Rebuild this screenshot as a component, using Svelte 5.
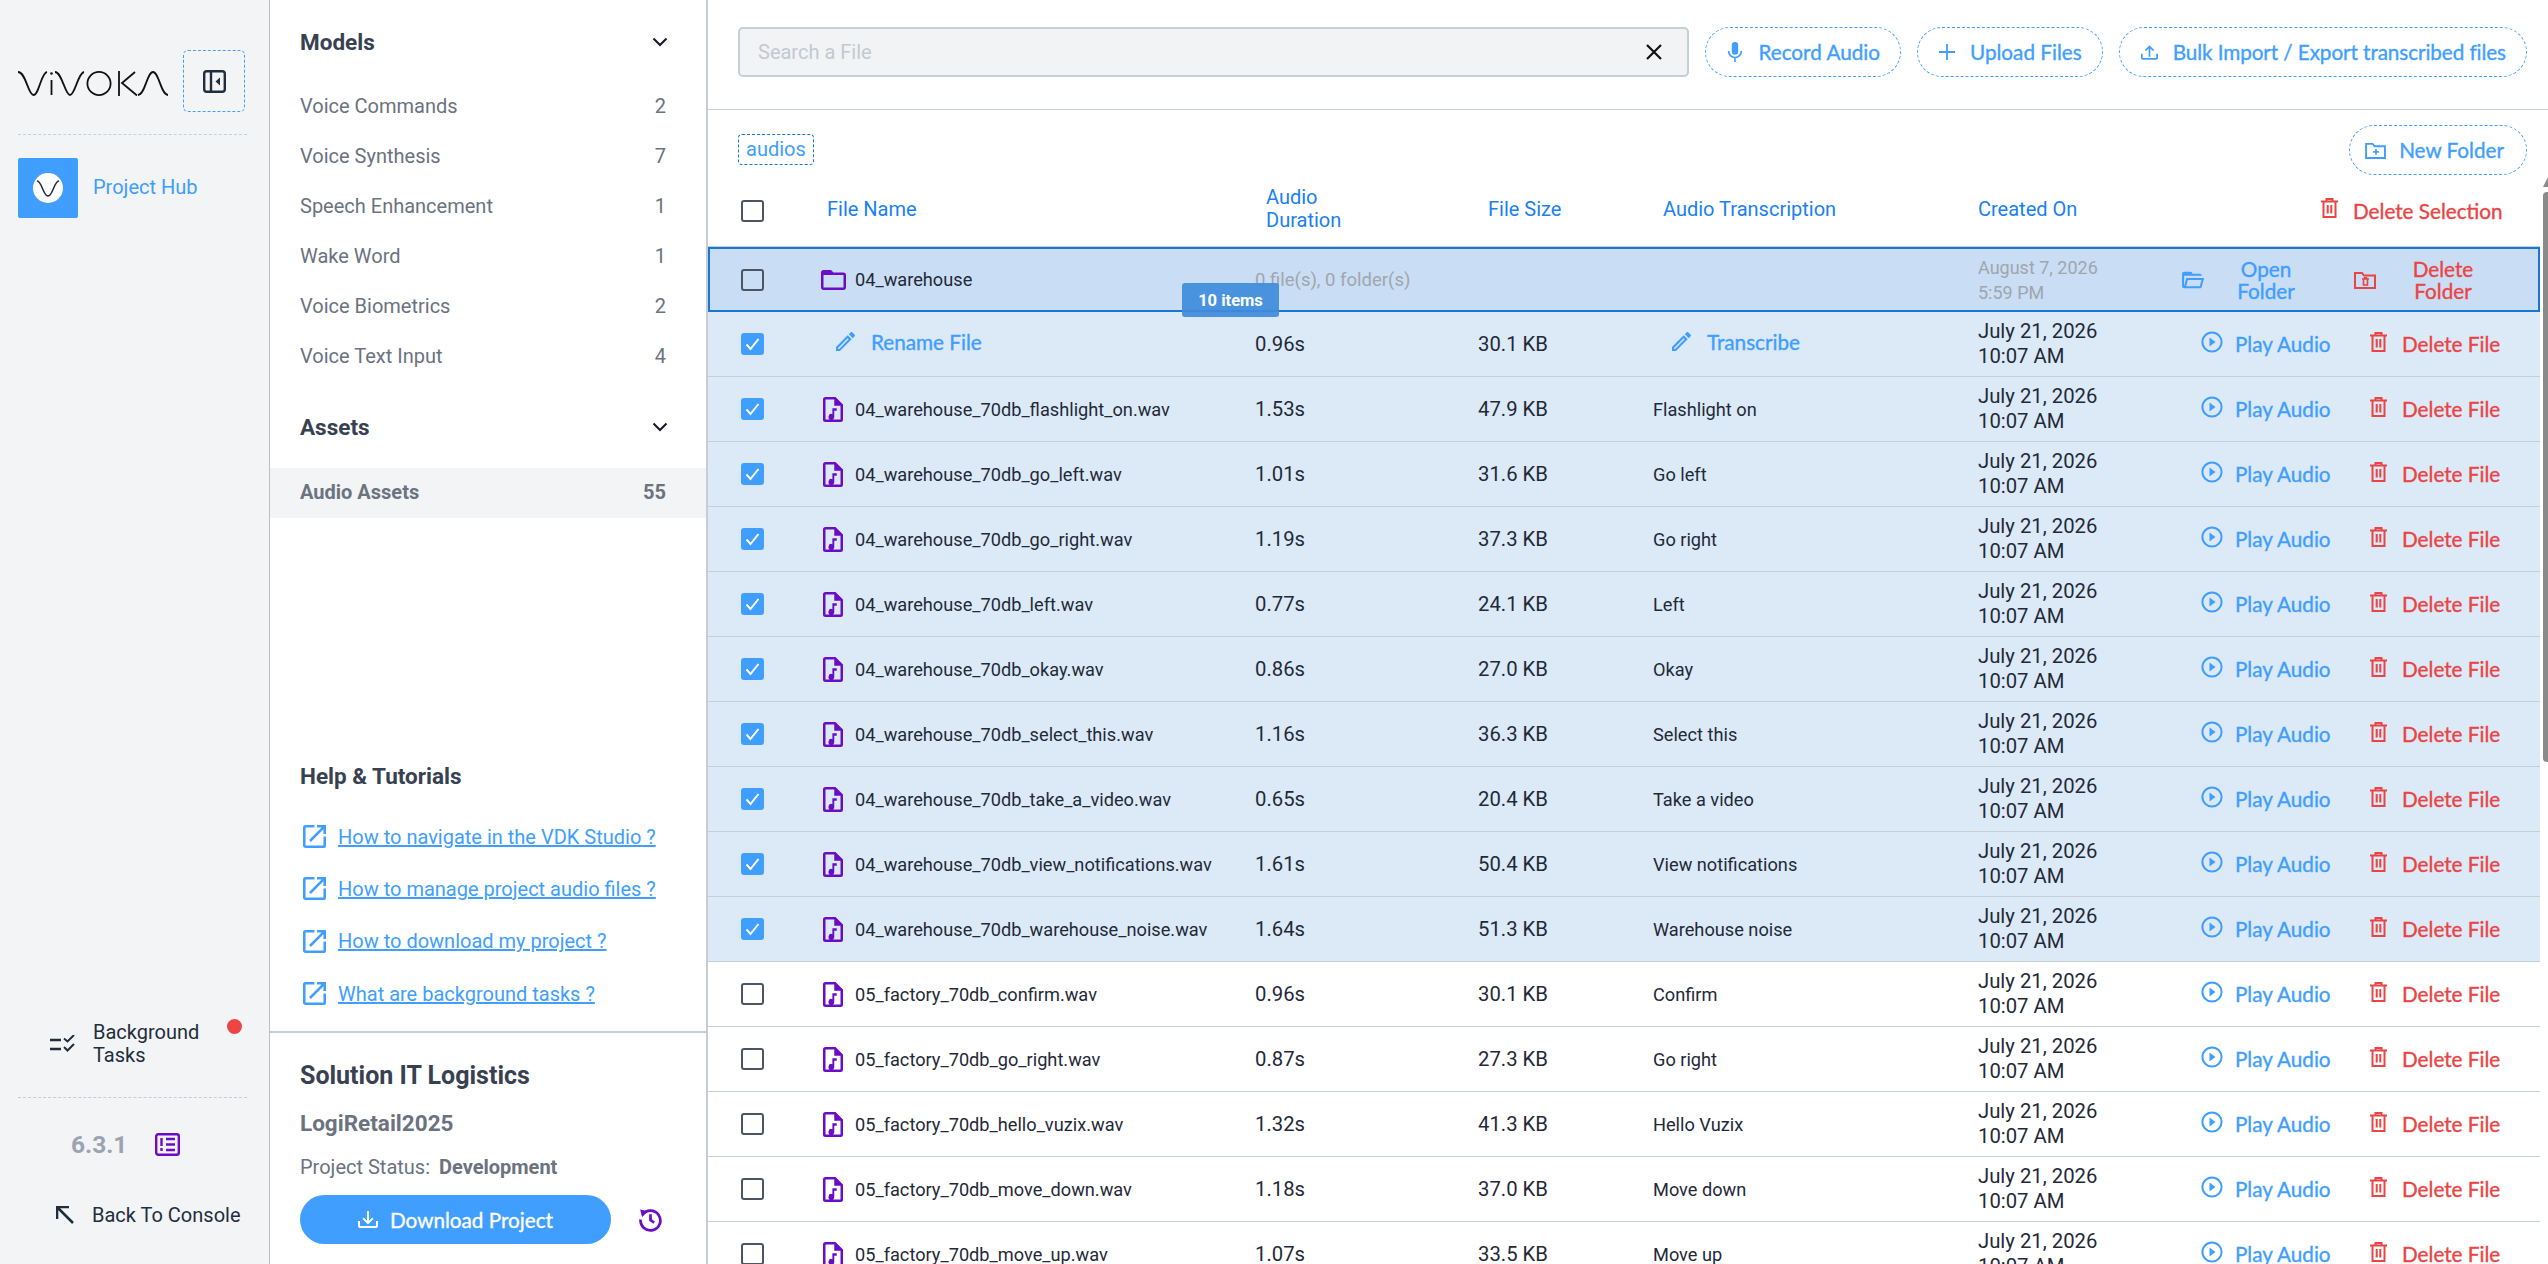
<script>
  const models = [
    ['Voice Commands', 2],
    ['Voice Synthesis', 7],
    ['Speech Enhancement', 1],
    ['Wake Word', 1],
    ['Voice Biometrics', 2],
    ['Voice Text Input', 4]
  ];
  const links = [
    'How to navigate in the VDK Studio ?',
    'How to manage project audio files ?',
    'How to download my project ?',
    'What are background tasks ?'
  ];
  const rows = [
    ['04_warehouse_70db_flashlight_on.wav', '1.53s', '47.9 KB', 'Flashlight on', true],
    ['04_warehouse_70db_go_left.wav', '1.01s', '31.6 KB', 'Go left', true],
    ['04_warehouse_70db_go_right.wav', '1.19s', '37.3 KB', 'Go right', true],
    ['04_warehouse_70db_left.wav', '0.77s', '24.1 KB', 'Left', true],
    ['04_warehouse_70db_okay.wav', '0.86s', '27.0 KB', 'Okay', true],
    ['04_warehouse_70db_select_this.wav', '1.16s', '36.3 KB', 'Select this', true],
    ['04_warehouse_70db_take_a_video.wav', '0.65s', '20.4 KB', 'Take a video', true],
    ['04_warehouse_70db_view_notifications.wav', '1.61s', '50.4 KB', 'View notifications', true],
    ['04_warehouse_70db_warehouse_noise.wav', '1.64s', '51.3 KB', 'Warehouse noise', true],
    ['05_factory_70db_confirm.wav', '0.96s', '30.1 KB', 'Confirm', false],
    ['05_factory_70db_go_right.wav', '0.87s', '27.3 KB', 'Go right', false],
    ['05_factory_70db_hello_vuzix.wav', '1.32s', '41.3 KB', 'Hello Vuzix', false],
    ['05_factory_70db_move_down.wav', '1.18s', '37.0 KB', 'Move down', false],
    ['05_factory_70db_move_up.wav', '1.07s', '33.5 KB', 'Move up', false]
  ];
</script>

{#snippet check(on)}
  <span class="check" class:on>
    {#if on}
      <svg viewBox="0 0 23 22" width="23" height="22"><path d="M5.5 11.5l4 4.5 8-10" fill="none" stroke="#fff" stroke-width="2"/></svg>
    {/if}
  </span>
{/snippet}

{#snippet pencil()}
  <svg class="pen" viewBox="3 3 18 18" width="19" height="19"><path fill="currentColor" d="M14.06 9.02l.92.92L5.92 19H5v-.92zM17.66 3c-.25 0-.51.1-.7.29l-1.83 1.83 3.75 3.75 1.83-1.83c.39-.39.39-1.04 0-1.41l-2.34-2.34c-.2-.2-.45-.29-.71-.29m-3.6 3.19L3 17.25V21h3.75L17.81 9.94z"/></svg>
{/snippet}

{#snippet trash()}
  <svg class="trash" viewBox="0 0 17 20" width="17" height="20"><path fill="none" stroke="currentColor" stroke-width="2" d="M0 3.5h17M5.5 3V1h6v2M2.5 3.5V19h12V3.5M6.7 7v8.500M10.300 7v8.500"/></svg>
{/snippet}

{#snippet fileActions()}
  <div class="actions">
    <svg class="play" viewBox="0 0 22 22" width="22" height="22"><circle cx="11" cy="11" r="9.600" fill="none" stroke="currentColor" stroke-width="2"/><path d="M8.500 6.500l6 4.500-6 4.500z" fill="currentColor"/></svg>
    <span class="act blue playtext">Play Audio</span>
    <span class="red trashwrap">{@render trash()}</span>
    <span class="act red deltext">Delete File</span>
  </div>
{/snippet}

<div class="app">
  <nav class="rail">
    <div class="brand">
      <svg class="logo" viewBox="0 0 150 25" width="150" height="25" aria-label="Vivoka">
        <g fill="none" stroke="#111" stroke-width="1.800">
          <path d="M0 1C8 1 10 24 15.500 24S23 2 29 1"/>
          <path d="M33.500 9V24"/>
          <path d="M37 1C44 1 47 24 52 24S60 2 66 1"/>
          <circle cx="81" cy="12.500" r="11.600"/>
          <path d="M101 0V25M117 1L104 12L119 24.500"/>
          <path d="M120 24C127 24 129 1 135 1S143 24 150 24"/>
        </g>
        <circle cx="33.500" cy="2.500" r="1.300" fill="#111"/>
      </svg>
      <button class="toggle" aria-label="Collapse">
        <svg viewBox="0 0 23 23" width="23" height="23"><rect x="1.200" y="1.200" width="20.600" height="20.600" rx="2.500" fill="none" stroke="#1f2d3d" stroke-width="2.400"/><path d="M8 1v21" stroke="#1f2d3d" stroke-width="2.400"/><path d="M17 7.500v8l-4.500-4z" fill="#1f2d3d"/></svg>
      </button>
    </div>
    <div class="hub">
      <span class="hubicon">
        <span class="hubdot">
          <svg viewBox="0 0 22 17" width="22" height="17"><path d="M0 1C5 1 6 16 11 16S17 1 22 1" fill="none" stroke="#1f2d3d" stroke-width="1.500"/></svg>
        </span>
      </span>
      <span class="hubtext">Project Hub</span>
    </div>

    <div class="railbottom">
      <div class="tasks">
        <svg viewBox="0 0 26 18" width="26" height="18"><path d="M0 5h11M0 14h11" stroke="#1f2d3d" stroke-width="2.400"/><path d="M14 3.500l3.500 3L24 0M14 12l3.500 3.500L24 9" fill="none" stroke="#1f2d3d" stroke-width="2"/></svg>
        <span class="taskstext">Background<br/>Tasks</span>
        <span class="dot"></span>
      </div>
      <div class="version">
        <span class="vnum">6.3.1</span>
        <svg viewBox="0 0 25 23" width="25" height="23"><rect x="1.200" y="1.200" width="22.600" height="20.600" rx="2" fill="none" stroke="#6a0dc4" stroke-width="2.400"/><path d="M6.500 5v8M6.500 15v3M11 6h9M11 11.500h9M11 17h9" stroke="#6a0dc4" stroke-width="2.400"/></svg>
      </div>
      <div class="back">
        <svg viewBox="0 0 18 18" width="18" height="18"><path d="M17 17L2 2M1 13V1h12" fill="none" stroke="#1f2d3d" stroke-width="2.600"/></svg>
        <span>Back To Console</span>
      </div>
    </div>
  </nav>

  <aside class="side">
    <div class="sechead"><span>Models</span>
      <svg viewBox="0 0 16 10" width="16" height="10"><path d="M1.500 1.500L8 8l6.500-6.500" fill="none" stroke="#111827" stroke-width="2"/></svg>
    </div>
    <ul class="mlist">
      {#each models as [n, c]}
        <li><span>{n}</span><span class="count">{c}</span></li>
      {/each}
    </ul>
    <div class="sechead assets"><span>Assets</span>
      <svg viewBox="0 0 16 10" width="16" height="10"><path d="M1.500 1.500L8 8l6.500-6.500" fill="none" stroke="#111827" stroke-width="2"/></svg>
    </div>
    <div class="activeitem"><span>Audio Assets</span><span class="count">55</span></div>

    <div class="help">
      <div class="helptitle">Help &amp; Tutorials</div>
      {#each links as l}
        <div class="hlink">
          <svg viewBox="3 3 18 18" width="23" height="23"><path fill="#409eff" d="M14 3v2h3.590l-9.830 9.830 1.410 1.410L19 6.410V10h2V3m-2 16H5V5h7V3H5a2 2 0 0 0-2 2v14c0 1.100.9 2 2 2h14a2 2 0 0 0 2-2v-7h-2z"/></svg>
          <span>{l}</span>
        </div>
      {/each}
    </div>

    <div class="project">
      <div class="ptitle">Solution IT Logistics</div>
      <div class="pname">LogiRetail2025</div>
      <div class="pstatus">Project Status: <b>Development</b></div>
      <div class="pbtns">
        <button class="download">
          <svg viewBox="2 2 20 17" width="20" height="17"><path fill="#fff" d="M2 12h2v5h16v-5h2v5c0 1.110-.89 2-2 2H4a2 2 0 0 1-2-2zM12 15.500l5.540-5.460-1.420-1.420L13 11.670V2h-2v9.670L7.880 8.620 6.460 10.040z"/></svg>
          <span>Download Project</span>
        </button>
        <svg class="hist" viewBox="0 0 24 24" width="25" height="25"><path fill="none" stroke="#6a0dc4" stroke-width="2.600" d="M4.200 7.500A9.500 9.500 0 1 1 2.500 12M12 7v5.500l3.500 2.500"/><path fill="#6a0dc4" d="M2 2.500l7.500 1.500-5.500 5.500z"/></svg>
      </div>
    </div>
  </aside>

  <main class="main">
    <div class="toolbar">
      <div class="search">
        <span class="ph">Search a File</span>
        <svg viewBox="0 0 18 18" width="18" height="18"><path d="M2 2l14 14M16 2L2 16" stroke="#111" stroke-width="2.200"/></svg>
      </div>
      <button class="pill">
        <svg viewBox="0 0 16 24" width="16" height="22"><path fill="currentColor" d="M8 1a3.500 3.500 0 0 0-3.500 3.500v7a3.500 3.500 0 0 0 7 0v-7A3.500 3.500 0 0 0 8 1z"/><path fill="none" stroke="currentColor" stroke-width="1.800" d="M1 11a7 7 0 0 0 14 0M8 18v5"/></svg>
        <span>Record Audio</span>
      </button>
      <button class="pill">
        <svg viewBox="0 0 16 16" width="16" height="16"><path d="M8 0v16M0 8h16" stroke="currentColor" stroke-width="1.800"/></svg>
        <span>Upload Files</span>
      </button>
      <button class="pill bulk">
        <svg viewBox="2 2 20 17" width="17" height="17"><path fill="currentColor" d="M2 12h2v5h16v-5h2v5c0 1.110-.89 2-2 2H4a2 2 0 0 1-2-2zM12 2 6.460 7.460l1.420 1.420L11 5.830v9.630h2V5.830l3.130 3.130 1.420-1.430z"/></svg>
        <span>Bulk Import / Export transcribed files</span>
      </button>
    </div>

    <div class="crumbs">
      <span class="crumb">audios</span>
      <button class="pill newf">
        <svg viewBox="0 0 22 18" width="21" height="17"><path fill="none" stroke="currentColor" stroke-width="2" d="M1 2h7l2 2.500h11V17H1z"/><path d="M11.500 7.500v6M8.500 10.500h6" stroke="currentColor" stroke-width="1.800"/></svg>
        <span>New Folder</span>
      </button>
    </div>

    <div class="grid thead">
      {@render check(false)}
      <span class="h h-name">File Name</span>
      <span class="h h-dur">Audio<br/>Duration</span>
      <span class="h h-size">File Size</span>
      <span class="h h-tr">Audio Transcription</span>
      <span class="h h-cr">Created On</span>
      <span class="delsel red">{@render trash()}<span class="act">Delete Selection</span></span>
    </div>

    <div class="grid row folder">
      {@render check(false)}
      <span class="name">
        <svg class="ficon" viewBox="2 4 20 16" width="25" height="20"><path fill="#6a0dc4" d="M20 18H4V8h16m0-2h-8l-2-2H4c-1.100 0-2 .9-2 2v12c0 1.100.9 2 2 2h16c1.100 0 2-.9 2-2V8c0-1.100-.9-2-2-2"/></svg>
        <span>04_warehouse</span>
      </span>
      <span class="muted small">0 file(s), 0 folder(s)</span>
      <span></span>
      <span></span>
      <span class="date muted mdate">August 7, 2026<br/>5:59 PM</span>
      <div class="factions">
        <svg class="blue" viewBox="2 4 22 16" width="23" height="18"><path fill="currentColor" d="M6.100 10 4 18V8h17a2 2 0 0 0-2-2h-7a2 2 0 0 0-2-2H4a2 2 0 0 0-2 2v12a2 2 0 0 0 2 2h15c.9 0 1.700-.6 1.900-1.500l2.300-8.500H6.100M19 18H6l1.600-6h13z"/></svg>
        <span class="act blue f1">Open<br/>Folder</span>
        <svg class="red fdel" viewBox="0 0 22 18" width="22" height="18"><path fill="none" stroke="currentColor" stroke-width="2" d="M1 2h7l2 2.500h11V17H1z"/><path fill="none" stroke="currentColor" stroke-width="1.600" d="M8 8h7M9.500 8v6h4V8M10.500 8V6.800h2V8"/></svg>
        <span class="act red f2">Delete<br/>Folder</span>
      </div>
    </div>
    <div class="tip">10 items</div>

    <div class="grid row sel">
      {@render check(true)}
      <span class="rename act blue">{@render pencil()}<span>Rename File</span></span>
      <span>0.96s</span>
      <span>30.1 KB</span>
      <span class="transcribe act blue">{@render pencil()}<span>Transcribe</span></span>
      <span class="date">July 21, 2026<br/>10:07 AM</span>
      {@render fileActions()}
    </div>

    {#each rows as [name, dur, size, tr, on]}
      <div class="grid row" class:sel={on}>
        {@render check(on)}
        <span class="name">
          <svg class="micon" viewBox="4 2 16 20" width="20" height="25"><path fill="#6a0dc4" d="M14 2H6a2 2 0 0 0-2 2v16a2 2 0 0 0 2 2h12a2 2 0 0 0 2-2V8zm4 18H6V4h7v5h5zM15 11h-3.500v4.700a2.300 2.300 0 1 0 1.500 2.100V13h2z"/></svg>
          <span>{name}</span>
        </span>
        <span>{dur}</span>
        <span>{size}</span>
        <span class="tr">{tr}</span>
        <span class="date">July 21, 2026<br/>10:07 AM</span>
        {@render fileActions()}
      </div>
    {/each}

    <span class="sb-arrow"></span>
    <span class="sb-thumb"></span>
  </main>
</div>

<style>
  :global(body) { margin: 0; background: #fff; }
  .app {
    display: flex; height: 100vh; overflow: hidden;
    font-family: Roboto, "Liberation Sans", sans-serif; color: #1f2937;
  }
  button { font: inherit; background: none; padding: 0; cursor: pointer; }
  ul { list-style: none; margin: 0; padding: 0; }

  .rail {
    flex: none; background: #f3f4f6; border-right: 1px solid #b9bfc6;
    display: flex; flex-direction: column; padding: 50px 22px 0 18px; width: 229px;
  }
  .brand {
    display: flex; align-items: center; gap: 15px; height: 62px;
    padding-bottom: 22px; border-bottom: 1px dashed #bfd2e2;
  }
  .logo { flex: none; margin-top: 4px; }
  .toggle {
    width: 62px; height: 62px; flex: none; border: 1px dashed #409eff; border-radius: 5px;
    display: flex; align-items: center; justify-content: center;
  }
  .hub { display: flex; align-items: center; gap: 15px; margin-top: 23px; }
  .hubicon {
    width: 60px; height: 60px; background: #409eff; border-radius: 2px;
    display: flex; align-items: center; justify-content: center;
  }
  .hubdot {
    width: 30px; height: 30px; border-radius: 50%; background: #fff;
    display: flex; align-items: center; justify-content: center;
  }
  .hubtext { color: #409eff; font-size: 20px; margin-top: -2px; }
  .railbottom { margin-top: auto; display: flex; flex-direction: column; }
  .tasks {
    position: relative; display: flex; align-items: center; gap: 17px; padding-left: 32px;
    height: 60px; border-bottom: 1px dashed #c6cdd4; padding-bottom: 22.500px; color: #1f2d3d;
    font-size: 20px; line-height: 23px;
  }
  .dot {
    position: absolute; left: 209px; top: 5px; width: 15px; height: 15px;
    border-radius: 50%; background: #ef4444;
  }
  .version { display: flex; align-items: center; gap: 28px; padding-left: 53px; margin-top: 32.500px; }
  .vnum { font-size: 24.500px; font-weight: 700; color: #9ca3af; }
  .back {
    display: flex; align-items: center; gap: 18px; padding-left: 38px; margin-top: 43.500px;
    margin-bottom: 37.500px; font-size: 20px; color: #1f2d3d;
  }

  .side {
    width: 436px; flex: none; border-right: 2px solid #c6cdd6; display: flex; flex-direction: column;
    color: #6b7280;
  }
  .sechead {
    height: 50px; margin-top: 17px; padding: 0 38px 0 30px; display: flex; align-items: center;
    justify-content: space-between; font-size: 22.500px; font-weight: 700; color: #374151;
  }
  .mlist { margin-top: 14px; }
  .mlist li, .activeitem {
    height: 50px; display: flex; align-items: center; justify-content: space-between;
    padding: 0 40px 0 30px; font-size: 20px;
  }
  .count { font-size: 20px; }
  .assets { margin-top: 21px; }
  .activeitem { margin-top: 16px; background: #f3f4f6; font-weight: 700; box-sizing: border-box; padding-bottom: 2px; }
  .help { margin-top: auto; padding-left: 30px; }
  .helptitle { font-size: 22.500px; font-weight: 700; color: #374151; height: 30px; line-height: 30px; margin-bottom: 19px; }
  .hlink { display: flex; align-items: center; gap: 12px; height: 52.400px; padding-left: 3px; color: #409eff; font-size: 20px; text-decoration: underline; }
  .hlink svg { flex: none; }
  .project { margin-top: 11px; border-top: 2px solid #c6cdd6; padding: 25px 30px 20px; }
  .ptitle { font-size: 25px; font-weight: 700; color: #374151; height: 36px; line-height: 36px; }
  .pname { font-size: 22.500px; font-weight: 700; color: #6b7280; height: 36px; line-height: 36px; margin-top: 11.500px; }
  .pstatus { font-size: 20px; height: 30px; line-height: 30px; margin-top: 10.600px; }
  .pstatus b { font-weight: 700; margin-left: 4px; }
  .pbtns { display: flex; align-items: center; gap: 27px; margin-top: 13px; }
  .download {
    width: 311px; height: 49px; background: #409eff; border: 0; border-radius: 25px; color: #fff;
    display: flex; align-items: center; justify-content: center; gap: 12px;
    font-family: Lato, sans-serif; font-size: 20.700px; font-weight: 400; -webkit-text-stroke: 0.35px currentColor;
  }

  .main { flex: 1; min-width: 0; position: relative; display: flex; flex-direction: column; }
  .toolbar {
    height: 110px; flex: none; box-sizing: border-box; padding: 27px 21px 0 30px; display: flex; gap: 16px;
    border-bottom: 1px solid #c6ced6;
  }
  .search {
    flex: 1; height: 50px; box-sizing: border-box; background: #f1f3f5; border: 2px solid #c6ced6; border-radius: 5px;
    display: flex; align-items: center; justify-content: space-between; padding: 0 24px 0 18px;
  }
  .ph { color: #c3c9cf; font-size: 20px; }
  .pill {
    height: 50px; box-sizing: border-box; border: 1px dashed #409eff; border-radius: 25px; color: #409eff;
    display: flex; align-items: center; gap: 15px; padding: 0 20px 0 21px; flex: none;
    font-family: Lato, sans-serif; font-size: 20.700px; font-weight: 400; -webkit-text-stroke: 0.35px currentColor;
  }
  .bulk { letter-spacing: -0.08px; }
  .newf { padding: 0 22px 0 15px; gap: 13px; }
  .crumbs {
    flex: none; height: 65px; box-sizing: border-box; padding: 15px 21px 0 30px;
    display: flex; align-items: flex-start; justify-content: space-between;
  }
  .crumb {
    margin-top: 9px; height: 31px; box-sizing: border-box; border: 1px dashed #1976d2; border-radius: 4px;
    padding: 0 7px; color: #409eff; font-size: 20px; line-height: 29px;
  }
  .grid {
    display: grid; align-items: center; width: 1832px; box-sizing: border-box;
    grid-template-columns: 79px 435px 223px 175px 325px 223px 1fr; padding-left: 33px;
  }
  .thead { height: 73px; flex: none; border-bottom: 2px solid #c6ced6; }
  .h { color: #1a7ff5; font-size: 20px; line-height: 23px; padding-bottom: 3px; }
  .h-name { padding-left: 7px; }
  .h-dur { padding-left: 11px; }
  .h-size { padding-left: 10px; }
  .h-tr { padding-left: 10px; }
  .delsel { display: flex; align-items: center; gap: 15px; padding-left: 120px; white-space: nowrap; }
  .check {
    width: 23px; height: 22px; box-sizing: border-box; border: 2px solid #4b5563; border-radius: 3px; display: block;
  }
  .check.on { background: #409eff; border: 0; }
  .check svg { display: block; }
  .row {
    height: 65px; flex: none; border-bottom: 1px solid #c6ced6; font-size: 20.300px; color: #1f2937;
  }
  .row.sel { background: #dce9f7; }
  .row.folder {
    background: #c9ddf4; border: 2px solid #1976d2; padding-left: 31px; margin-top: -1px;
  }
  .name { display: flex; align-items: center; gap: 10px; font-size: 18.200px; white-space: nowrap; }
  .ficon { margin-left: 1px; margin-right: -1px; }
  .micon { margin-left: 3px; margin-right: 2px; }
  .tr { font-size: 18.200px; }
  .small { font-size: 18.500px; }
  .date { line-height: 25px; }
  .mdate { font-size: 18px; }
  .muted { color: #a0a6ad; }
  .act { font-family: Lato, sans-serif; font-size: 20.700px; font-weight: 400; -webkit-text-stroke: 0.35px currentColor; }
  .blue { color: #409eff; }
  .red { color: #ea4444; }
  .rename { display: flex; align-items: center; gap: 16px; padding-left: 16px; margin-top: -5px; }
  .transcribe { display: flex; align-items: center; gap: 16px; padding-left: 19px; margin-top: -5px; }
  .actions { display: flex; align-items: center; color: #409eff; }
  .playtext { margin-left: 12px; width: 135px; white-space: nowrap; margin-top: -1px; }
  .trashwrap { display: flex; }
  .deltext { margin-left: 15px; white-space: nowrap; margin-top: -1px; }
  .actions svg, .delsel svg { margin-top: -5px; }
  .factions { display: flex; align-items: center; margin-left: -19px; }
  .f1 { width: 100px; flex: none; text-align: center; line-height: 22px; margin-left: 11px; }
  .f2 { width: 100px; flex: none; text-align: center; line-height: 22px; margin-left: 17px; }
  .fdel { margin-left: 38px; flex: none; }
  .tip {
    position: absolute; left: 474px; top: 283px; width: 97px; height: 34px; border-radius: 3px;
    background: rgba(64, 140, 220, 0.93); color: #fff; font-size: 16.500px; font-weight: 700;
    display: flex; align-items: center; justify-content: center;
  }
  .sb-thumb {
    position: absolute; right: 0; top: 192px; width: 5px; height: 570px; background: #8a8a8a;
    border-radius: 4px 0 0 4px;
  }
  .sb-arrow {
    position: absolute; right: 0; top: 177px; width: 5px; height: 10px; background: #8a8a8a;
    clip-path: polygon(100% 0, 100% 100%, 0 100%);
  }
</style>
